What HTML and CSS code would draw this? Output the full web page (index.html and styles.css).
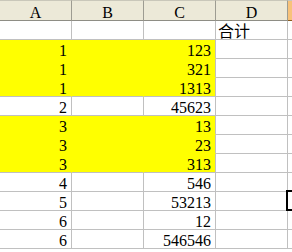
FILE: index.html
```html
<!DOCTYPE html>
<html>
<head>
<meta charset="utf-8">
<link rel="stylesheet" href="styles.css">
</head>
<body>
<div class="sheet">
  <div class="hdr">A</div><div class="hdr">B</div><div class="hdr">C</div><div class="hdr">D</div><div class="hdr sel"></div>

  <div class="c"></div><div class="c"></div><div class="c"></div><div class="c txt">合计</div><div class="c"></div>

  <div class="c y">1</div><div class="c y"></div><div class="c y edge">123</div><div class="c"></div><div class="c"></div>
  <div class="c y">1</div><div class="c y"></div><div class="c y edge">321</div><div class="c"></div><div class="c"></div>
  <div class="c y last">1</div><div class="c y last"></div><div class="c y edge last">1313</div><div class="c"></div><div class="c"></div>
  <div class="c">2</div><div class="c"></div><div class="c">45623</div><div class="c"></div><div class="c"></div>
  <div class="c y">3</div><div class="c y"></div><div class="c y edge">13</div><div class="c"></div><div class="c"></div>
  <div class="c y">3</div><div class="c y"></div><div class="c y edge">23</div><div class="c"></div><div class="c"></div>
  <div class="c y last">3</div><div class="c y last"></div><div class="c y edge last">313</div><div class="c"></div><div class="c"></div>
  <div class="c">4</div><div class="c"></div><div class="c">546</div><div class="c"></div><div class="c"></div>
  <div class="c">5</div><div class="c"></div><div class="c">53213</div><div class="c"></div><div class="c"></div>
  <div class="c">6</div><div class="c"></div><div class="c">12</div><div class="c"></div><div class="c"></div>
  <div class="c">6</div><div class="c"></div><div class="c">546546</div><div class="c"></div><div class="c"></div>
  <div class="active"></div>
</div>
</body>
</html>
```

FILE: styles.css
```css
html, body {
  margin: 0;
  padding: 0;
  background: #fff;
}
body {
  width: 292px;
  height: 252px;
  overflow: hidden;
}
.sheet {
  position: relative;
  display: grid;
  grid-template-columns: 72px 72px 72px 72px 4px;
  grid-template-rows: 21px;
  grid-auto-rows: 19px;
  font-family: "Liberation Serif", "Noto Sans CJK SC", serif;
  font-size: 16px;
  color: #000;
}
.hdr {
  box-sizing: border-box;
  background: #ece9d8;
  border-top: 1px solid #c9c7ba;
  border-right: 1px solid #9d9c92;
  border-bottom: 1px solid #8e8d85;
  text-align: center;
  line-height: 24px;
  height: 21px;
  overflow: hidden;
}
.hdr.sel {
  background: #f8c27a;
  border-right: 0;
  border-bottom-color: #8a5a1a;
}
.c {
  box-sizing: border-box;
  border-right: 1px solid #c0c0c0;
  border-bottom: 1px solid #c0c0c0;
  text-align: right;
  padding-right: 4px;
  height: 19px;
  line-height: 21px;
  white-space: nowrap;
}
.c.y {
  background: #ffff00;
  border-right-color: #ffff00;
  border-bottom-color: #ffff00;
}
.c.y.edge {
  border-right-color: #c0c0c0;
}
.c.y.last {
  border-bottom-color: #c0c0c0;
}
.c.txt {
  text-align: left;
  padding-left: 2px;
  font-family: "Noto Sans CJK SC", sans-serif;
  line-height: 19px;
}
.active {
  position: absolute;
  left: 286px;
  top: 190px;
  width: 20px;
  height: 21px;
  box-sizing: border-box;
  border: 2px solid #000;
  border-right: 0;
}
```
